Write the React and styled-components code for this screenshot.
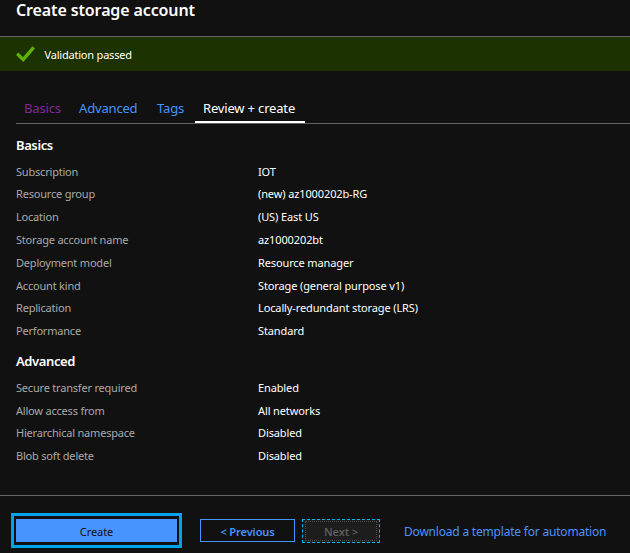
import React from "react";
import styled, { createGlobalStyle } from "styled-components";

const GlobalStyle = createGlobalStyle`
  * { box-sizing: border-box; }
  body {
    margin: 0;
    background: #111111;
    color: #ffffff;
    font-family: "Noto Sans", "Open Sans", sans-serif;
    font-size: 11px;
    overflow: hidden;
  }
`;

const Page = styled.main`
  display: flex;
  flex-direction: column;
  width: 630px;
  height: 553px;
  background: #111111;
`;

const Header = styled.header`
  height: 37px;
  padding-left: 16px;
  border-bottom: 1px solid #646464;
`;

const Title = styled.h1`
  margin: 0;
  font-size: 16px;
  line-height: 20px;
  font-weight: 600;
  letter-spacing: -0.12px;
`;

const Banner = styled.div`
  display: flex;
  align-items: center;
  gap: 9.5px;
  height: 34px;
  padding-left: 16px;
  background: #1c3200;
  letter-spacing: -0.2px;
`;

const Tabs = styled.nav`
  display: flex;
  align-items: flex-end;
  height: 53px;
  margin-left: 16px;
  border-bottom: 1px solid #646464;
`;

const Tab = styled.a`
  height: 29px;
  padding: 0 8px;
  line-height: 28px;
  font-size: 13px;
  letter-spacing: -0.17px;
  white-space: nowrap;
  width: ${(p) => p.$width}px;
  color: ${(p) => p.$color};
  border-bottom: 2px solid ${(p) => (p.$active ? "#ffffff" : "transparent")};
`;

const Content = styled.div`
  flex: 1;
  padding: 11px 16px 0;
`;

const Section = styled.section`
  margin-bottom: 8.3px;
`;

const Heading = styled.h2`
  margin: 0 0 5.55px;
  font-size: 13px;
  line-height: 20px;
  font-weight: 600;
  letter-spacing: -0.4px;
`;

const Row = styled.div`
  display: grid;
  grid-template-columns: 242px 1fr;
  line-height: 22.8px;
`;

const Label = styled.span`
  color: #a9a9a9;
  letter-spacing: -0.2px;
`;

const Value = styled.span`
  color: #ffffff;
  letter-spacing: -0.12px;
`;

const Footer = styled.footer`
  display: flex;
  align-items: flex-start;
  height: 58px;
  padding: 17px 0 0 11px;
  border-top: 1px solid #646464;
`;

const CreateFrame = styled.div`
  width: 171px;
  height: 35px;
  padding: 3px 2px;
  border: 3px solid #00a2ed;
  margin-right: 18px;
`;

const Button = styled.button`
  display: block;
  height: 23px;
  margin: ${(p) => (p.$flush ? 0 : "6px 7px 0 0")};
  padding: 2px 0 0;
  font: inherit;
  line-height: 20px;
  letter-spacing: -0.08px;
  width: ${(p) => p.$width}px;
  font-weight: ${(p) => p.$weight || 400};
  color: ${(p) => p.$color};
  background: ${(p) => p.$fill || "transparent"};
  border: 1px solid ${(p) => p.$border};
`;

const NextButton = styled(Button)`
  height: 24px;
  border: 1px dashed #00b7f0;
  padding: 1px 2px;
  margin-right: 24px;
`;

const FocusRing = styled.span`
  display: block;
  height: 20px;
  line-height: 19px;
  border: 1px dotted #4c4c4c;
`;

const Link = styled.a`
  margin-top: 7px;
  font-size: 12px;
  line-height: 24px;
  letter-spacing: -0.2px;
  color: #4894fe;
  white-space: nowrap;
`;

const CheckIcon = () => (
  <svg width="19" height="16" viewBox="0 0 19 16">
    <path d="M1.2 7.8 L7.2 13.6 L17.7 1.4" fill="none" stroke="#5db300" strokeWidth="3.3" />
  </svg>
);

const sections = [
  {
    title: "Basics",
    rows: [
      ["Subscription", "IOT"],
      ["Resource group", "(new) az1000202b-RG"],
      ["Location", "(US) East US"],
      ["Storage account name", "az1000202bt"],
      ["Deployment model", "Resource manager"],
      ["Account kind", "Storage (general purpose v1)"],
      ["Replication", "Locally-redundant storage (LRS)"],
      ["Performance", "Standard"],
    ],
  },
  {
    title: "Advanced",
    rows: [
      ["Secure transfer required", "Enabled"],
      ["Allow access from", "All networks"],
      ["Hierarchical namespace", "Disabled"],
      ["Blob soft delete", "Disabled"],
    ],
  },
];

export default function App() {
  return (
    <>
      <GlobalStyle />
      <Page>
        <Header>
          <Title>Create storage account</Title>
        </Header>
        <Banner>
          <CheckIcon />
          <span>Validation passed</span>
        </Banner>
        <Tabs>
          <Tab $color="#80279a" $width={55}>Basics</Tab>
          <Tab $color="#4894fe" $width={78}>Advanced</Tab>
          <Tab $color="#4894fe" $width={46}>Tags</Tab>
          <Tab $color="#ffffff" $width={110} $active>Review + create</Tab>
        </Tabs>
        <Content>
          {sections.map((s) => (
            <Section key={s.title}>
              <Heading>{s.title}</Heading>
              {s.rows.map(([label, value]) => (
                <Row key={label}>
                  <Label>{label}</Label>
                  <Value>{value}</Value>
                </Row>
              ))}
            </Section>
          ))}
        </Content>
        <Footer>
          <CreateFrame>
            <Button $flush $width={161} $fill="#4894fe" $border="#4894fe" $color="#111111">Create</Button>
          </CreateFrame>
          <Button $width={95} $border="#4894fe" $color="#4894fe" $weight={600}>&lt; Previous</Button>
          <NextButton $width={78} $fill="#1d1d1d" $color="#5c5c5c" $weight={600}>
            <FocusRing>Next &gt;</FocusRing>
          </NextButton>
          <Link>Download a template for automation</Link>
        </Footer>
      </Page>
    </>
  );
}
